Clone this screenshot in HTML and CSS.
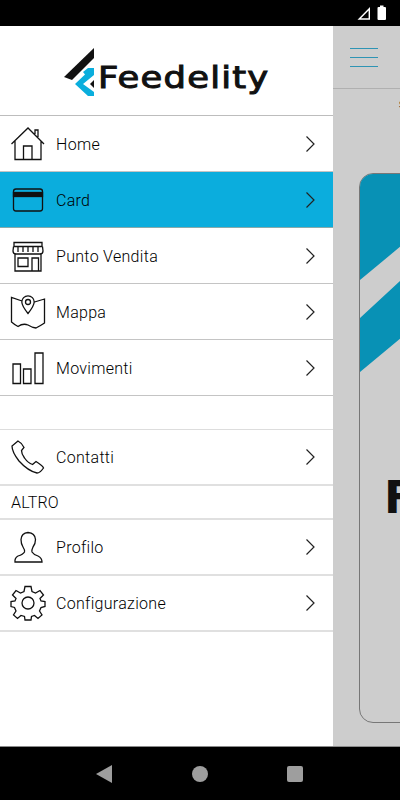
FILE: index.html
```html
<!DOCTYPE html>
<html lang="en">
<head>
  <meta charset="UTF-8">
  <title>Feedelity</title>
  <link rel="stylesheet" href="styles.css">
</head>
<body>
  <div class="status-bar">
    <svg class="status-icon" width="40" height="16" viewBox="0 0 40 16">
      <path d="M1.500 14.700 L14 2 V14.700 Z M5 13.300 H12.600 V5.400 Z" fill="#fff" fill-rule="evenodd"/>
      <path d="M21.500 3 Q21.500 2 22.500 2 H24 V0.500 H27.500 V2 H29 Q30 2 30 3 V14 Q30 15 29 15 H22.500 Q21.500 15 21.500 14 Z" fill="#fff"/>
    </svg>
  </div>

  <div class="screen">
    <nav class="drawer">
      <div class="logo">
        <svg class="logo-mark" width="31" height="50" viewBox="0 0 31 50">
          <path d="M0 30 L30 1 V11 L8 33 Z" fill="#111"/>
          <path d="M24 21 H30 V28 L19 37 L30 45 V49 H24 L11 37 L21 27.500 L19 25 Z" fill="#0aaedd"/>
          <path d="M30 33 L26 37 L30 41 Z" fill="#111"/>
        </svg>
        <span class="logo-text">Feedelity</span>
      </div>

      <a class="row">
        <svg class="icon" viewBox="0 0 36 36"><path d="M1.500 18 L18 2 L34 18 M5 15 V33.500 H31 V15 M13.500 33.500 V20 H22 V33.500 M25 8 V4 H28 V11"/></svg>
        <span class="label">Home</span>
        <svg class="chevron" viewBox="0 0 9 16"><path d="M0.500 0.500 L8 8 L0.500 15.500"/></svg>
      </a>
      <a class="row active">
        <svg class="icon" viewBox="0 0 36 36"><rect x="3.500" y="7" width="29" height="22" rx="2.500"/><rect x="3.500" y="10.500" width="29" height="4" fill="#111"/></svg>
        <span class="label">Card</span>
        <svg class="chevron" viewBox="0 0 9 16"><path d="M0.500 0.500 L8 8 L0.500 15.500"/></svg>
      </a>
      <a class="row">
        <svg class="icon" viewBox="0 0 36 36"><path d="M4 4.500 H32 V8.500 H4 Z M5 16 V33 H31 V16 M3.500 8.500 L3 13 Q3 16 6 16 H30 Q33 16 33 13 L32.500 8.500 M8 8.500 V14 M13 8.500 V14 M18 8.500 V14 M23 8.500 V14 M28 8.500 V14 M8 20 H18 V28.500 H8 Z M22 33 V20 H28.500 V33"/></svg>
        <span class="label">Punto Vendita</span>
        <svg class="chevron" viewBox="0 0 9 16"><path d="M0.500 0.500 L8 8 L0.500 15.500"/></svg>
      </a>
      <a class="row">
        <svg class="icon" viewBox="0 0 36 36"><path d="M12 7 L1.500 3.500 V28 Q5 31 8 32.500 Q13 29 18 31 Q22 33.500 26 34 Q30 32 34.500 29 V5 L24.500 8 M18 19.500 Q12 12 11.800 8 A6.200 6.200 0 0 1 24.200 8 Q24 12 18 19.500 Z"/><circle cx="18" cy="8" r="2.500"/></svg>
        <span class="label">Mappa</span>
        <svg class="chevron" viewBox="0 0 9 16"><path d="M0.500 0.500 L8 8 L0.500 15.500"/></svg>
      </a>
      <a class="row">
        <svg class="icon" viewBox="0 0 36 36"><path d="M3 14 H10.500 V33.500 H3 Z M13.500 19 H21 V33.500 H13.500 Z M25 3 H33 V33.500 H25 Z"/></svg>
        <span class="label">Movimenti</span>
        <svg class="chevron" viewBox="0 0 9 16"><path d="M0.500 0.500 L8 8 L0.500 15.500"/></svg>
      </a>

      <div class="spacer"></div>

      <a class="row light">
        <svg class="icon" viewBox="0 0 36 36"><path d="M8 2 L2 7 Q2 13 9 22 Q18 32 27 34 Q30 34 33.500 29 Q33 27 26 22.500 L22.500 25.500 Q18 24 14.500 19 Q11.500 15 11.500 11.500 L14 8.500 Q12 4 8 2 Z"/></svg>
        <span class="label">Contatti</span>
        <svg class="chevron" viewBox="0 0 9 16"><path d="M0.500 0.500 L8 8 L0.500 15.500"/></svg>
      </a>

      <div class="section">ALTRO</div>

      <a class="row light">
        <svg class="icon" viewBox="0 0 36 36"><path d="M5 33 Q4.500 29 8 27 Q13 25.500 14.500 23 Q15 21 13 18 Q11 15 11 10.500 Q11.500 4 18 3.500 Q25 4 25.500 10.500 Q25.500 15 23 18 Q21.500 21 22 23 Q23.500 25.500 28 27 Q32 29 32 33 Z"/></svg>
        <span class="label">Profilo</span>
        <svg class="chevron" viewBox="0 0 9 16"><path d="M0.500 0.500 L8 8 L0.500 15.500"/></svg>
      </a>
      <a class="row light">
        <svg class="icon" viewBox="0 0 36 36"><path d="M15 1.500 H21 L22 6.500 L25.500 8 L30 5.500 L33.500 10 L30 13.500 L31 16 L35 16.500 V21.500 L31 22.500 L29.500 26 L32 30 L28 33.500 L24.500 30.500 L21.500 31.500 L21 35 H15 L14.500 31.500 L11 30.500 L7.500 33.500 L3.500 30 L6 26 L4.500 22.500 L1 21.500 V16.500 L5 16 L6 13.500 L2.500 10 L6 5.500 L10.500 8 L14 6.500 Z"/><circle cx="18" cy="18" r="6"/></svg>
        <span class="label">Configurazione</span>
        <svg class="chevron" viewBox="0 0 9 16"><path d="M0.500 0.500 L8 8 L0.500 15.500"/></svg>
      </a>
    </nav>

    <main class="content">
      <div class="topbar">
        <div class="burger"><span></span><span></span><span></span></div>
      </div>
      <div class="page-title">S</div>
      <div class="card">
        <svg class="card-stripes" width="41" height="200" viewBox="0 0 41 200">
          <path d="M0 106 L41 72 V0 H0 Z M0 144 L41 106 V164 L0 198 Z" fill="#0891b5"/>
        </svg>
        <span class="card-letter">F</span>
      </div>
    </main>
  </div>

  <div class="nav-bar">
    <span class="nav-back"></span>
    <span class="nav-home"></span>
    <span class="nav-recent"></span>
  </div>
</body>
</html>
```

FILE: styles.css
```css
* {
  box-sizing: border-box;
}
html, body {
  margin: 0;
  padding: 0;
}
body {
  width: 400px;
  height: 800px;
  overflow: hidden;
  display: flex;
  flex-direction: column;
  font-family: 'Roboto', sans-serif;
  background: #000;
}
.status-bar {
  height: 26px;
  flex: none;
  display: flex;
  justify-content: flex-end;
  align-items: center;
  background: #000;
  padding-right: 4px;
}
.status-icon {
  display: block;
}
.screen {
  height: 721px;
  flex: none;
  display: flex;
  border-bottom: 1px solid #8a8a8a;
}

/* drawer */
.drawer {
  width: 333px;
  flex: none;
  background: #fff;
}
.logo {
  height: 90px;
  display: flex;
  align-items: center;
  padding-left: 64px;
  border-bottom: 1px solid #bdbdbd;
  overflow: hidden;
}
.logo-mark {
  flex: none;
  display: block;
  margin-top: 2px;
}
.logo-text {
  font-family: 'DejaVu Sans', sans-serif;
  font-size: 30px;
  line-height: 1;
  letter-spacing: 1px;
  color: #111;
  -webkit-text-stroke: 1px #111;
  display: inline-block;
  transform: scaleX(1.18);
  transform-origin: left center;
  margin: 15px 0 0 3px;
}
.row {
  height: 56px;
  display: flex;
  align-items: center;
  padding: 0 18px 0 10px;
  color: #000;
  border-bottom: 1px solid #c4c4c4;
}
.row.light {
  border-bottom: 2px solid #e0e0e0;
}
.row.active {
  background: #0baddd;
  border-bottom-color: #8aa;
}
.icon {
  width: 36px;
  height: 36px;
  flex: none;
  fill: none;
  stroke: #111;
  stroke-width: 1.3;
}
.label {
  flex: 1;
  margin-left: 10px;
  padding-top: 1px;
  font-size: 16px;
  font-weight: 300;
  letter-spacing: 0.3px;
}
.chevron {
  width: 9px;
  height: 16px;
  flex: none;
  fill: none;
  stroke: #222;
  stroke-width: 1.2;
}
.spacer {
  height: 34px;
  border-bottom: 1px solid #ddd;
}
.section {
  height: 34px;
  padding-left: 11px;
  display: flex;
  align-items: center;
  font-size: 16px;
  font-weight: 300;
  letter-spacing: 0.2px;
  color: #000;
  border-bottom: 2px solid #e0e0e0;
}

/* dimmed page behind the drawer */
.content {
  flex: 1;
  background: #cdcdcd;
  overflow: hidden;
}
.topbar {
  height: 63px;
  padding: 22px 0 0 17px;
  border-bottom: 1px solid #b0b0b0;
}
.burger {
  width: 28px;
  display: flex;
  flex-direction: column;
  gap: 8px;
}
.burger span {
  height: 1px;
  background: #2e94b4;
}
.page-title {
  height: 12px;
  margin: 10px 0 0 66px;
  font-size: 9px;
  line-height: 12px;
  color: #111;
}
.card {
  position: relative;
  width: 120px;
  height: 550px;
  margin: 62px 0 0 26px;
  border: 1px solid #777;
  border-radius: 14px;
  overflow: hidden;
}
.card-stripes {
  position: absolute;
  left: 0;
  top: 0;
}
.card-letter {
  position: absolute;
  left: 24px;
  top: 301px;
  font-family: 'DejaVu Sans', sans-serif;
  font-weight: bold;
  font-size: 45px;
  line-height: 1;
  color: #111;
}

/* android buttons */
.nav-bar {
  flex: 1;
  display: flex;
  align-items: center;
  padding: 0 97px 0 96px;
  justify-content: space-between;
  background: #000;
}
.nav-back {
  width: 0;
  height: 0;
  border-style: solid;
  border-width: 9px 16px 9px 0;
  border-color: transparent #9e9e9e transparent transparent;
}
.nav-home {
  width: 16px;
  height: 16px;
  border-radius: 50%;
  background: #9e9e9e;
}
.nav-recent {
  width: 16px;
  height: 16px;
  border-radius: 2px;
  background: #9e9e9e;
}
```
